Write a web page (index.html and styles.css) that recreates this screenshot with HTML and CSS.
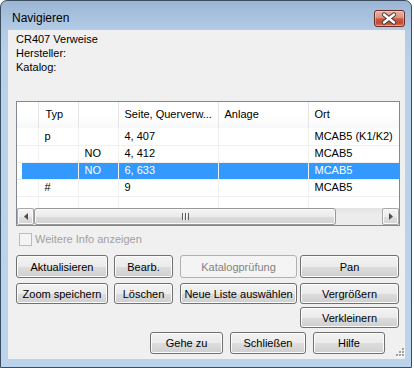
FILE: index.html
```html
<!DOCTYPE html>
<html lang="de">
<head>
    <meta charset="UTF-8">
    <title>Navigieren</title>
    <link rel="stylesheet" href="styles.css">
</head>
<body>
    <div class="window">
        <div class="titlebar">
            <span class="title">Navigieren</span>
            <button type="button" class="close" title="Schließen">
                <svg width="29" height="15" viewBox="0 0 29 15">
                    <path d="M9 3.5 L19 11.5 M19 3.5 L9 11.5" stroke="#3b3b3b" stroke-width="4.2" stroke-linecap="round" fill="none"/>
                    <path d="M9 3.5 L19 11.5 M19 3.5 L9 11.5" stroke="#fff" stroke-width="2.4" stroke-linecap="round" fill="none"/>
                </svg>
            </button>
        </div>
        <div class="client">
            <div class="info">
                <div class="info-name">CR407 Verweise</div>
                <div class="info-line">Hersteller:</div>
                <div class="info-line">Katalog:</div>
            </div>

            <div class="list">
                <div class="list-body">
                    <table class="grid">
                        <colgroup>
                            <col style="width:21px">
                            <col style="width:40px">
                            <col style="width:40px">
                            <col style="width:100px">
                            <col style="width:90px">
                            <col style="width:100px">
                        </colgroup>
                        <thead>
                            <tr>
                                <th></th>
                                <th>Typ</th>
                                <th></th>
                                <th>Seite, Querverw...</th>
                                <th>Anlage</th>
                                <th>Ort</th>
                            </tr>
                        </thead>
                        <tbody>
                            <tr>
                                <td></td><td>p</td><td></td><td>4, 407</td><td></td><td>MCAB5 (K1/K2)</td>
                            </tr>
                            <tr>
                                <td></td><td></td><td>NO</td><td>4, 412</td><td></td><td>MCAB5</td>
                            </tr>
                            <tr class="selected">
                                <td></td><td></td><td>NO</td><td>6, 633</td><td></td><td>MCAB5</td>
                            </tr>
                            <tr>
                                <td></td><td>#</td><td></td><td>9</td><td></td><td>MCAB5</td>
                            </tr>
                            <tr class="filler">
                                <td></td><td></td><td></td><td></td><td></td><td></td>
                            </tr>
                        </tbody>
                    </table>
                </div>
                <div class="hscroll">
                    <span class="sb-btn">
                        <svg width="4" height="7" viewBox="0 0 4 7"><path d="M4 0 L0 3.5 L4 7 Z" fill="#4d4d4d"/></svg>
                    </span>
                    <span class="sb-track">
                        <span class="sb-thumb">
                            <span class="grip-lines"></span>
                        </span>
                    </span>
                    <span class="sb-btn">
                        <svg width="4" height="7" viewBox="0 0 4 7"><path d="M0 0 L4 3.5 L0 7 Z" fill="#4d4d4d"/></svg>
                    </span>
                </div>
            </div>

            <label class="check">
                <input type="checkbox" disabled>
                <span class="check-box"></span>
                <span class="check-text">Weitere Info anzeigen</span>
            </label>

            <div class="btn-row row1">
                <button type="button" class="btn b1">Aktualisieren</button>
                <button type="button" class="btn b2">Bearb.</button>
                <button type="button" class="btn b3" disabled>Katalogprüfung</button>
                <button type="button" class="btn b4">Pan</button>
            </div>
            <div class="btn-row row2">
                <button type="button" class="btn b1">Zoom speichern</button>
                <button type="button" class="btn b2">Löschen</button>
                <button type="button" class="btn b3">Neue Liste auswählen</button>
                <button type="button" class="btn b4">Vergrößern</button>
            </div>
            <div class="btn-row row3">
                <button type="button" class="btn b4">Verkleinern</button>
            </div>
            <div class="btn-row footer">
                <button type="button" class="btn f1">Gehe zu</button>
                <button type="button" class="btn f2">Schließen</button>
                <button type="button" class="btn f3">Hilfe</button>
            </div>

            <svg class="size-grip" width="12" height="12" viewBox="0 0 12 12">
                <g fill="#fff">
                    <rect x="10" y="2" width="2" height="2"/>
                    <rect x="7" y="5" width="2" height="2"/><rect x="10" y="5" width="2" height="2"/>
                    <rect x="4" y="8" width="2" height="2"/><rect x="7" y="8" width="2" height="2"/><rect x="10" y="8" width="2" height="2"/>
                </g>
                <g fill="#a0a0a0">
                    <rect x="9" y="1" width="2" height="2"/>
                    <rect x="6" y="4" width="2" height="2"/><rect x="9" y="4" width="2" height="2"/>
                    <rect x="3" y="7" width="2" height="2"/><rect x="6" y="7" width="2" height="2"/><rect x="9" y="7" width="2" height="2"/>
                </g>
            </svg>
        </div>
    </div>
</body>
</html>
```

FILE: styles.css
```css
* {
    box-sizing: border-box;
}
body {
    margin: 0;
    background: #fff;
    font-family: "Liberation Sans", Arial, sans-serif;
    font-size: 11px;
    color: #000;
}
.window {
    width: 412px;
    height: 368px;
    border: 1px solid #3c4d60;
    border-radius: 7px 7px 0 0;
    background: linear-gradient(#9bb6d4, #b3cbe5 29px, #bad1ea 60px, #bcd3ec);
    padding: 0 6px 8px 7px;
    display: flex;
    flex-direction: column;
}
.titlebar {
    height: 29px;
    display: flex;
    justify-content: space-between;
    align-items: flex-start;
}
.title {
    font-size: 12px;
    line-height: 14px;
    margin: 10px 0 0 4px;
}
.close {
    width: 31px;
    height: 17px;
    margin-top: 9px;
    padding: 0;
    border: 1px solid #6b2b27;
    border-radius: 3px;
    background: linear-gradient(#e9b0a4, #dd8f7e 45%, #c95a43 52%, #c24a32 80%, #d4765c);
    box-shadow: inset 0 0 0 1px rgba(255,255,255,0.35);
    display: flex;
    align-items: center;
    justify-content: center;
}
.client {
    position: relative;
    height: 329px;
    background: #f0f0f0;
    padding: 3px 0 0 8px;
}
.info-name,
.info-line {
    line-height: 13px;
}
.info-line {
    margin-top: 1px;
}
.list {
    margin-top: 27px;
    width: 384px;
    height: 125px;
    border: 1px solid #828790;
    background: #fff;
}
.list-body {
    height: 106px;
    overflow: hidden;
}
.grid {
    border-collapse: collapse;
    table-layout: fixed;
    width: 391px;
}
.grid th,
.grid td {
    padding: 0 0 0 6px;
    text-align: left;
    font-weight: normal;
    white-space: nowrap;
    overflow: hidden;
    line-height: 13px;
}
.grid th {
    height: 26px;
    padding-top: 6px;
    vertical-align: top;
    border-right: 1px solid #e5e5e5;
    background: linear-gradient(#fff, #fff 50%, #f7f8fa);
}
.grid th:nth-child(2) {
    padding-left: 7px;
}
.grid td {
    height: 17px;
    border-right: 1px solid #f0f0f0;
    border-bottom: 1px solid #f0f0f0;
}
.grid .selected td {
    background: #3399ff;
    color: #fff;
}
.grid .selected td:first-child {
    background: linear-gradient(to right, #fff 5px, #3399ff 5px);
    border-right-color: #3399ff;
}
.grid .filler td {
    height: 20px;
    border-bottom: none;
}
.hscroll {
    height: 17px;
    display: flex;
    background: linear-gradient(#e3e3e3, #ececec 40%, #ececec);
}
.sb-btn {
    width: 17px;
    height: 17px;
    border: 1px solid #a7a7a7;
    border-radius: 2px;
    background: linear-gradient(#f4f4f4, #ececec 50%, #dedede 51%, #d6d6d6);
    box-shadow: inset 0 0 0 1px #fafafa;
    display: flex;
    align-items: center;
    justify-content: center;
}
.sb-track {
    flex: 1;
    display: flex;
}
.sb-thumb {
    width: 302px;
    height: 17px;
    border: 1px solid #979797;
    border-radius: 3px;
    background: linear-gradient(#f4f4f4, #ebebeb 50%, #dcdcdc 51%, #d3d3d3);
    box-shadow: inset 0 0 0 1px #fafafa;
    display: flex;
    align-items: center;
    justify-content: center;
}
.grip-lines {
    width: 7px;
    height: 7px;
    background: repeating-linear-gradient(to right, #5c5c5c 0 1px, #f6f6f6 1px 2px, transparent 2px 3px);
}
.check {
    display: flex;
    align-items: center;
    height: 13px;
    margin: 7px 0 0 3px;
    color: #a0a0a0;
}
.check input {
    display: none;
}
.check-box {
    width: 13px;
    height: 13px;
    border: 1px solid #bcbcbc;
    background: #f4f4f4;
}
.check-text {
    margin-left: 3px;
    line-height: 13px;
}
.btn-row {
    display: flex;
}
.row1 {
    margin-top: 9px;
}
.row2 {
    margin-top: 5px;
}
.row3 {
    margin-top: 3px;
    justify-content: flex-end;
    width: 383px;
}
.footer {
    margin-top: 4px;
}
.btn {
    height: 23px;
    padding: 0;
    font: inherit;
    color: #000;
    border: 1px solid #707070;
    border-radius: 3px;
    background: linear-gradient(#f2f2f2, #ebebeb 50%, #dddddd 51%, #cfcfcf);
    box-shadow: inset 0 0 0 1px #fcfcfc;
}
.btn:disabled {
    color: #838383;
    border-color: #adb2b5;
    background: #f4f4f4;
    box-shadow: none;
}
.row2 .btn,
.row3 .btn {
    height: 21px;
}
.footer .btn {
    height: 22px;
}
.b1 {
    width: 92px;
}
.b2 {
    width: 59px;
    margin-left: 6px;
}
.b3 {
    width: 117px;
    margin-left: 7px;
}
.b4 {
    width: 99px;
    margin-left: 3px;
}
.f1 {
    width: 73px;
    margin-left: 134px;
}
.f2 {
    width: 76px;
    margin-left: 7px;
}
.f3 {
    width: 72px;
    margin-left: 7px;
}
.size-grip {
    position: absolute;
    right: 0;
    bottom: 0;
}
```
